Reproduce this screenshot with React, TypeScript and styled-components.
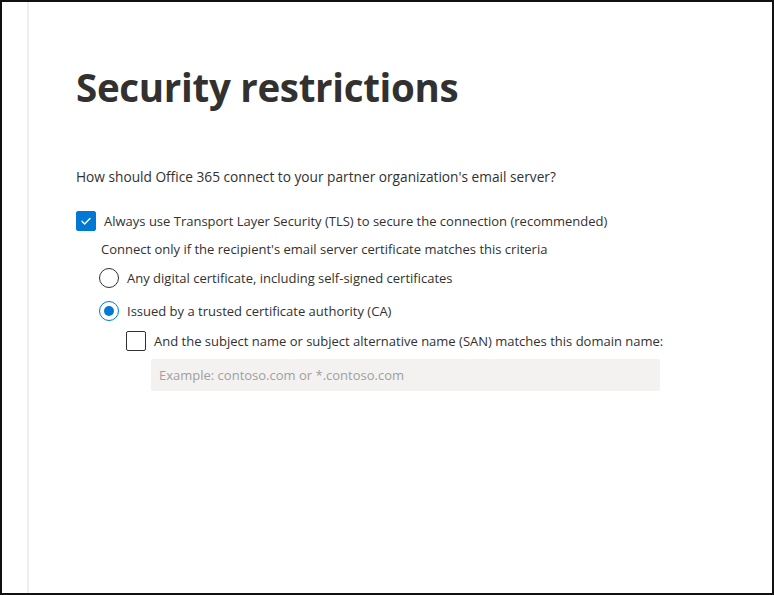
import styled, { createGlobalStyle } from "styled-components";

const GlobalStyle = createGlobalStyle`
  html, body {
    margin: 0;
    padding: 0;
    background: #ffffff;
  }
  body {
    font-family: "Segoe UI", "Open Sans", "Noto Sans", sans-serif;
    color: #323130;
  }
`;

const Frame = styled.div`
  box-sizing: border-box;
  width: 774px;
  height: 595px;
  border: 2px solid #111111;
  display: flex;
  background: white;
  overflow: hidden;
`;

const Rail = styled.div`
  width: 25px;
  flex-shrink: 0;
  border-right: 2px solid #efeeed;
`;

const Panel = styled.div`
  flex: 1;
  padding: 59px 0 0 47px;
  display: flex;
  flex-direction: column;
`;

const Title = styled.h1`
  margin: 0;
  font-size: 38.5px;
  font-weight: 700;
  line-height: 52px;
  letter-spacing: -0.3px;
  color: #323130;
`;

const Question = styled.p`
  margin: 54px 0 0 0;
  font-size: 13.7px;
  line-height: 20px;
  color: #323130;
`;

const Row = styled.label<{ indent: number; top: number }>`
  display: flex;
  align-items: center;
  gap: 8px;
  margin-left: ${p => p.indent}px;
  margin-top: ${p => p.top}px;
  font-size: 13px;
  line-height: 20px;
  color: #323130;
`;

const Hint = styled.div`
  margin: 8px 0 0 25px;
  font-size: 13px;
  line-height: 20px;
  color: #323130;
`;

const Box = styled.span<{ checked?: boolean }>`
  box-sizing: border-box;
  width: 20px;
  height: 20px;
  flex-shrink: 0;
  border-radius: 2px;
  border: 1px solid ${p => (p.checked ? "#0078d4" : "#323130")};
  background: ${p => (p.checked ? "#0078d4" : "#ffffff")};
  display: flex;
  align-items: center;
  justify-content: center;
`;

const Radio = styled.span<{ checked?: boolean }>`
  box-sizing: border-box;
  width: 20px;
  height: 20px;
  flex-shrink: 0;
  border-radius: 50%;
  border: 1px solid ${p => (p.checked ? "#0078d4" : "#323130")};
  display: flex;
  align-items: center;
  justify-content: center;

  &::after {
    content: "";
    width: 10px;
    height: 10px;
    border-radius: 50%;
    background: ${p => (p.checked ? "#0078d4" : "transparent")};
  }
`;

const DomainInput = styled.input`
  box-sizing: border-box;
  margin: 8px 0 0 75px;
  width: 509px;
  height: 32px;
  border: none;
  border-radius: 2px;
  background: #f3f2f1;
  padding: 0 8px;
  font-family: inherit;
  font-size: 13px;
  color: #323130;
  outline: none;

  &::placeholder {
    color: #a19f9d;
  }
`;

function Check() {
  return (
    <svg width="12" height="12" viewBox="0 0 12 12" fill="none">
      <path d="M2 6.3l2.6 2.6L10 3.4" stroke="#ffffff" strokeWidth="1.4" strokeLinecap="round" strokeLinejoin="round" />
    </svg>
  );
}

export default function App() {
  return (
    <>
      <GlobalStyle />
      <Frame>
        <Rail />
        <Panel>
          <Title>Security restrictions</Title>
          <Question>How should Office 365 connect to your partner organization's email server?</Question>
          <Row indent={0} top={24}>
            <Box checked>
              <Check />
            </Box>
            Always use Transport Layer Security (TLS) to secure the connection (recommended)
          </Row>
          <Hint>Connect only if the recipient's email server certificate matches this criteria</Hint>
          <Row indent={23} top={9}>
            <Radio />
            Any digital certificate, including self-signed certificates
          </Row>
          <Row indent={23} top={13}>
            <Radio checked />
            Issued by a trusted certificate authority (CA)
          </Row>
          <Row indent={50} top={10}>
            <Box />
            And the subject name or subject alternative name (SAN) matches this domain name:
          </Row>
          <DomainInput placeholder="Example: contoso.com or *.contoso.com" />
        </Panel>
      </Frame>
    </>
  );
}
